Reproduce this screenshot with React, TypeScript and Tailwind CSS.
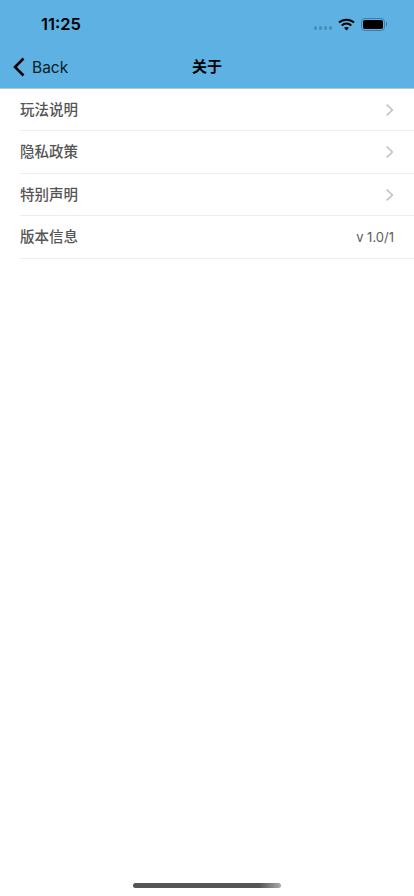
const font = "font-['Inter','Noto_Sans_CJK_SC',sans-serif]";

function Chevron() {
  return (
    <svg width="9" height="14" viewBox="0 0 9 14" fill="none">
      <path d="M1.7 1.6 7.3 7l-5.6 5.4" stroke="#c4c4c6" strokeWidth="1.7" />
    </svg>
  );
}

function Row({ label, value }: { label: string; value?: string }) {
  return (
    <div className="flex h-[42.5px] items-center justify-between border-b border-[#ececec] pr-5 pt-px">
      <span className="text-[14.5px] font-medium text-[#555]">{label}</span>
      {value ? <span className="text-[13px] text-[#5c5c5c]">{value}</span> : <Chevron />}
    </div>
  );
}

function StatusIcons() {
  return (
    <div className="flex items-center">
      <div className="mt-[8px] mr-[6px] flex gap-[1.5px]">
        <span className="h-[3.5px] w-[3.5px] rounded-full bg-[#4a8cb8]" />
        <span className="h-[3.5px] w-[3.5px] rounded-full bg-[#4a8cb8]" />
        <span className="h-[3.5px] w-[3.5px] rounded-full bg-[#4a8cb8]" />
        <span className="h-[3.5px] w-[3.5px] rounded-full bg-[#4a8cb8]" />
      </div>
      <svg width="17" height="13" viewBox="0 0 17 13" fill="none" className="mr-[6px]">
        <path d="M1 4.6C5.2.8 11.8.8 16 4.6" stroke="#000" strokeWidth="2" />
        <path d="M3.7 7.4c2.7-2.4 6.9-2.4 9.6 0" stroke="#000" strokeWidth="2" />
        <path d="M6 9.8c1.4-1.1 3.6-1.1 5 0l-2.5 2.8z" fill="#000" />
      </svg>
      <div className="flex items-center">
        <div className="flex h-[13px] w-[24px] items-center justify-center rounded-[4px] border border-[#3f7ea8]">
          <div className="h-[9px] w-[20px] rounded-[2px] bg-black" />
        </div>
        <div className="ml-[1px] h-[4px] w-[1px] bg-[#3f7ea8]" />
      </div>
    </div>
  );
}

export default function App() {
  return (
    <div className={`${font} relative h-[896px] w-[414px] overflow-hidden bg-white`}>
      <div className="h-[88px] bg-[#5eb1e3] shadow-[0_1px_0_#b6c6cf]">
        <div className="flex h-[46px] items-center justify-between pt-[2px] pr-[27px] pl-[41px]">
          <span className="text-[16.5px] font-semibold text-black">11:25</span>
          <StatusIcons />
        </div>
        <div className="relative flex h-[42px] items-center justify-center">
          <div className="absolute top-0 left-[13px] flex h-full items-center">
            <svg width="12" height="20" viewBox="0 0 12 20" fill="none">
              <path d="M10.5 1.5 2 10l8.5 8.5" stroke="#000" strokeWidth="2.6" />
            </svg>
            <span className="mt-[2px] ml-[7px] text-[15.5px] text-[#0a1a26]">Back</span>
          </div>
          <span className="text-[15px] font-semibold text-black">关于</span>
        </div>
      </div>
      <div className="pt-[0.5px] pl-5">
        <Row label="玩法说明" />
        <Row label="隐私政策" />
        <Row label="特别声明" />
        <Row label="版本信息" value="v 1.0/1" />
      </div>
      <div className="absolute bottom-[8px] left-[133px] h-[5px] w-[148px] rounded-full bg-gradient-to-r from-[#555] from-85% to-[#aaa]" />
    </div>
  );
}
